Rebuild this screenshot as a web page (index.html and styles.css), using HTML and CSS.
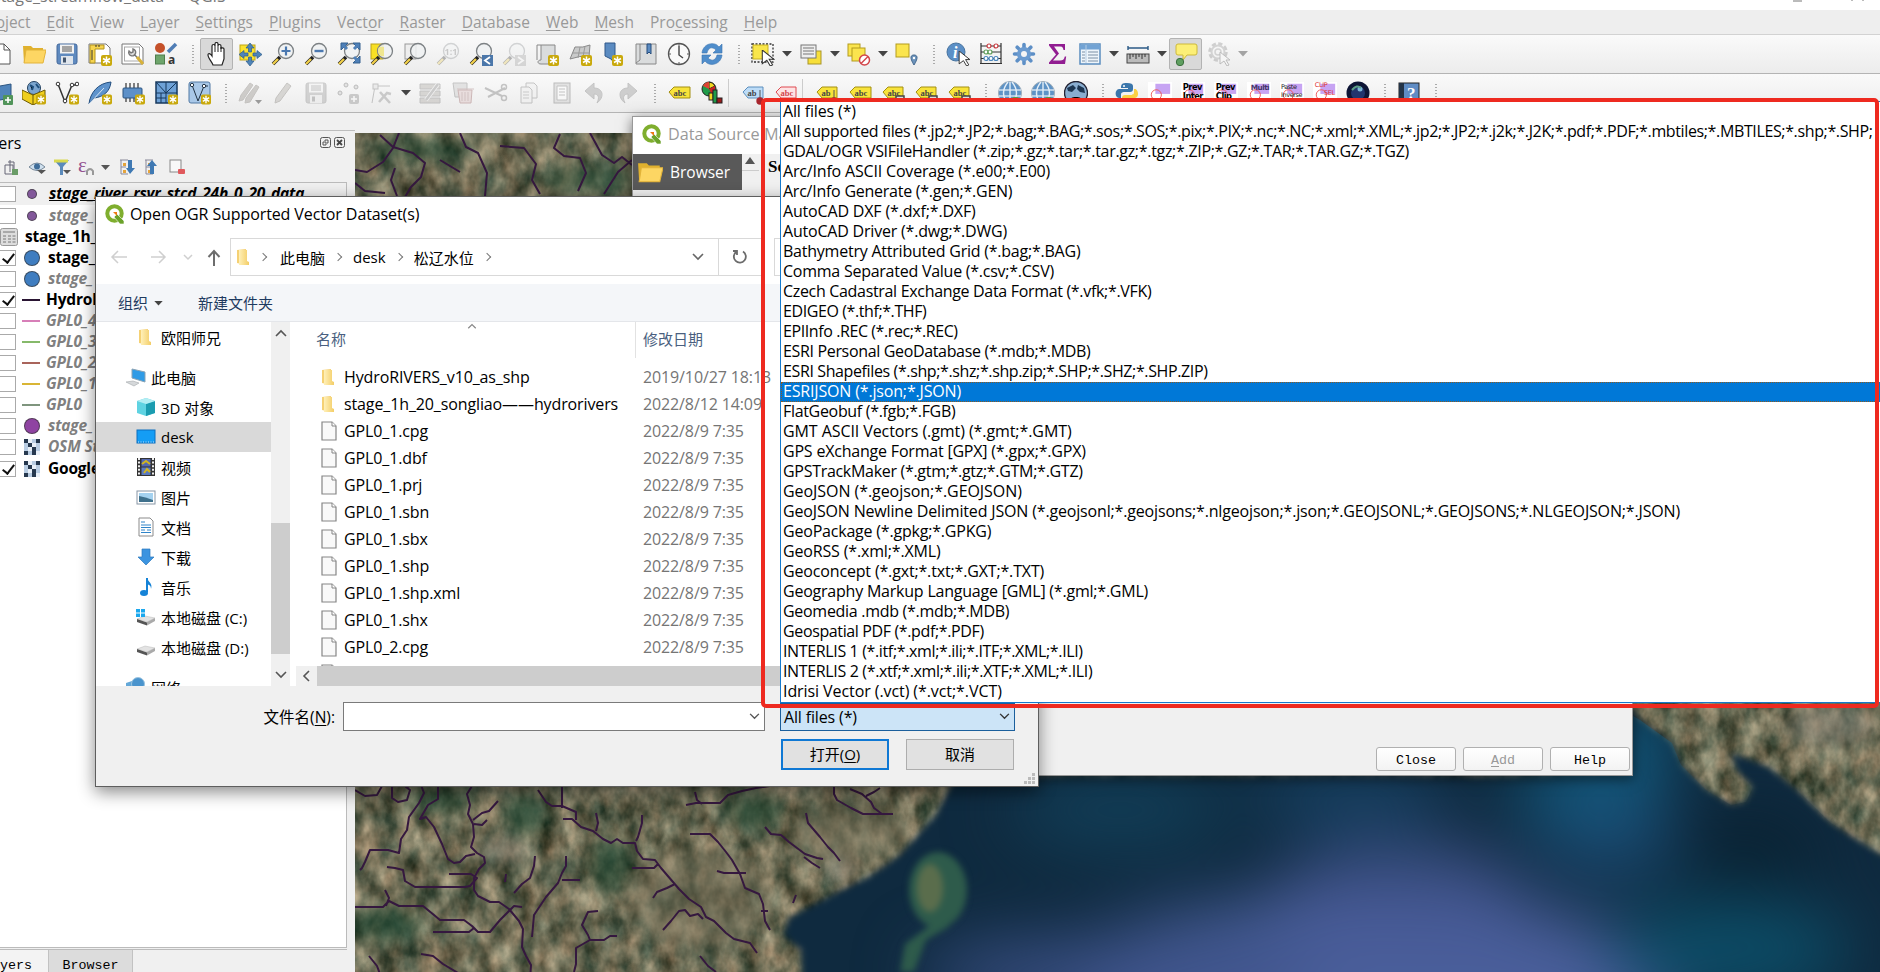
FILE: index.html
```html
<!DOCTYPE html>
<html lang="zh-CN">
<head>
<meta charset="utf-8">
<title>QGIS</title>
<link rel="stylesheet" href="styles.css">
</head>
<body>
<svg class="defs" width="0" height="0">
  <defs>
    <linearGradient id="fold" x1="0" y1="0" x2="1" y2="0"><stop offset="0" stop-color="#fff0b8"/><stop offset="1" stop-color="#f3cd66"/></linearGradient>
    <symbol id="star" viewBox="0 0 11 11"><rect width="11" height="11" rx="2" fill="#c9a90c"/><path d="M5.500 1.500v8M2 3.500l7 4M9 3.500l-7 4" stroke="#fff" stroke-width="1.500"/></symbol>
    <symbol id="lens" viewBox="0 0 24 24"><path d="M2 22l7-7" stroke="#222" stroke-width="3.600"/><path d="M2 22l5-5" stroke="#f0cf4a" stroke-width="2.400"/><circle cx="15" cy="9" r="7.500" fill="#eef1f2" fill-opacity=".85" stroke="#7c8184" stroke-width="1.300"/></symbol>
    <symbol id="new" viewBox="0 0 24 24"><path d="M3 2h12l6 6v14H3z" fill="#fff" stroke="#555"/><path d="M15 2v6h6" fill="none" stroke="#555"/></symbol>
    <symbol id="open" viewBox="0 0 24 24"><path d="M1 4h8l2 2h10v15H2z" fill="#e0b12e"/><path d="M4 8h20l-3 13H2z" fill="#fdd663" stroke="#e2b33a"/></symbol>
    <symbol id="save" viewBox="0 0 24 24"><rect x="2" y="2" width="20" height="20" rx="2" fill="#5f8abf" stroke="#44699b"/><rect x="5" y="2.500" width="14" height="9" fill="#f2f2f2"/><path d="M7 5h10M7 7h10M7 9h10" stroke="#444" stroke-width=".9"/><rect x="6" y="14" width="12" height="8" fill="#dfe5ec"/><rect x="8" y="15.500" width="3" height="5" fill="#44566e"/></symbol>
    <symbol id="layout" viewBox="0 0 24 24"><path d="M1 2h17l4 4v15H1z" fill="#fff" stroke="#777"/><path d="M2 3h14v4H7v14H2z" fill="#f6d44e" stroke="#b39420"/><path d="M4 8v10M8 3v2M11 3v2" stroke="#333"/><use href="#star" x="13" y="13" width="11" height="11"/></symbol>
    <symbol id="manager" viewBox="0 0 24 24"><path d="M1 2h17l4 4v16H1z" fill="#fff" stroke="#777"/><rect x="3.500" y="5" width="15" height="14" fill="none" stroke="#aaa"/><path d="M8 9a3.500 3.500 0 1 0 4-2v3l-2 1zM13 12l8 9" fill="#ddd" stroke="#777" stroke-width="1.400"/><path d="M16 15l6 7" stroke="#d8b23a" stroke-width="3"/></symbol>
    <symbol id="style" viewBox="0 0 24 24"><circle cx="6" cy="6" r="5" fill="#c5512a"/><path d="M14 10l8-8" stroke="#4f7db5" stroke-width="3.500"/><rect x="1.500" y="13" width="9" height="9" fill="#6ea56c" stroke="#4e7e4d"/><text x="14" y="22" font-size="12" font-family="Open Sans" fill="#333">a</text></symbol>
    <symbol id="hand" viewBox="0 0 24 24"><path d="M8 23c-1-3-5-7-5-10 0-2 2-2 4 1V4c0-2 3-2 3 0V2c0-2 3-2 3 0v2c0-2 3-2 3 0v3c0-2 3-1 3 0v10l-2 6z" fill="#fff" stroke="#222" stroke-width="1.200"/><path d="M10 4v6M13 4v6M16 5v5" stroke="#222"/></symbol>
    <symbol id="pansel" viewBox="0 0 24 24"><rect x="2" y="3" width="15" height="15" fill="#fbe22d" stroke="#c0a617"/><path d="M12 1l4 5h-2.500v4h-3V6H8zM12 24l4-5h-2.500v-4h-3v4H8zM1 12.500l5-4V11h4v3H6v2.500zM24 12.500l-5-4V11h-4v3h4v2.500z" fill="#4e84b8" stroke="#2e5c89" stroke-width=".7"/></symbol>
    <symbol id="zin" viewBox="0 0 24 24"><use href="#lens"/><path d="M15 4.500v9M10.500 9h9" stroke="#4a78b0" stroke-width="2.200"/></symbol>
    <symbol id="zout" viewBox="0 0 24 24"><use href="#lens"/><path d="M10.500 9h9" stroke="#4a78b0" stroke-width="2.400"/></symbol>
    <symbol id="zfull" viewBox="0 0 24 24"><use href="#lens"/><path d="M4 1h7L4 8zM23 1v7l-7-7zM23 21h-7l7-7z" fill="#4f80b8" stroke="#34618f"/><path d="M6 3l4 4M21 3l-4 4M21 19l-4-4" stroke="#4f80b8" stroke-width="3"/></symbol>
    <symbol id="zsel" viewBox="0 0 24 24"><rect x="1" y="2" width="12" height="15" fill="#f8e024" stroke="#b9a11c"/><use href="#lens"/><path d="M9 5h5v9h-3a6 6 0 0 1-2-9z" fill="#efe68f"/></symbol>
    <symbol id="zlay" viewBox="0 0 24 24"><rect x="2" y="2" width="11" height="15" fill="#eee" stroke="#999"/><use href="#lens"/></symbol>
    <symbol id="zone" viewBox="0 0 24 24"><use href="#lens"/><text x="8.500" y="12.500" font-size="9" font-family="Open Sans" font-weight="700" fill="#666">1:1</text></symbol>
    <symbol id="zlast" viewBox="0 0 24 24"><use href="#lens"/><rect x="13" y="13" width="11" height="11" fill="#4b77aa"/><path d="M21 15l-5 3.500 5 3.500" stroke="#fff" stroke-width="1.800" fill="none"/></symbol>
    <symbol id="znext" viewBox="0 0 24 24"><use href="#lens"/><rect x="13" y="13" width="11" height="11" fill="#999"/><path d="M16 15l5 3.500-5 3.500" stroke="#fff" stroke-width="1.800" fill="none"/></symbol>
    <symbol id="newmap" viewBox="0 0 24 24"><path d="M2 3h18v19H6c-4 0-4-4 0-4V3" fill="#dadcdd" stroke="#888"/><path d="M2 3v15" stroke="#888"/><use href="#star" x="13" y="13" width="11" height="11"/></symbol>
    <symbol id="map3d" viewBox="0 0 24 24"><path d="M7 5q8 1 15-2l-1 12q-9-2-19 2z" fill="#c9caca" stroke="#888"/><path d="M5 11h17M12 5l-2 11M17 4l-2 11" stroke="#999"/><use href="#star" x="13" y="13" width="11" height="11"/></symbol>
    <symbol id="bmnew" viewBox="0 0 24 24"><path d="M4 1h10v21l-4-5-6-3z" fill="#5b8bc1" stroke="#31598a"/><use href="#star" x="11" y="13" width="11" height="11"/></symbol>
    <symbol id="bm" viewBox="0 0 24 24"><path d="M2 2h20v20H2z" fill="#dadcdd" stroke="#888"/><path d="M6 2v16l-4 3" fill="none" stroke="#888"/><path d="M13 2h4v10l-2-2-2 2z" fill="#5b8bc1" stroke="#264d7c"/></symbol>
    <symbol id="clock" viewBox="0 0 24 24"><circle cx="12" cy="12" r="10.500" fill="#fafafa" stroke="#555" stroke-width="1.300"/><path d="M12 4v9l4 3" fill="none" stroke="#444" stroke-width="1.400"/><path d="M12 2v2M12 20v2M2 12h2M20 12h2" stroke="#555"/></symbol>
    <symbol id="refresh" viewBox="0 0 24 24"><path d="M2 11C3 1 15-1 19 5l3-3v9h-9l3-3c-4-4-8-2-9 3zM22 13c-1 10-13 12-17 6l-3 3v-9h9l-3 3c4 4 8 2 9-3z" fill="#4f8dcb" stroke="#3a73b0" stroke-width=".6"/></symbol>
    <symbol id="cursor" viewBox="0 0 12 14"><path d="M1 0l10 8H7l3 5-2 1-3-5-4 3z" fill="#fff" stroke="#333" stroke-width=".9"/></symbol>
    <symbol id="select" viewBox="0 0 24 24"><rect x="1" y="2" width="21" height="18" fill="none" stroke="#333" stroke-dasharray="2 1.500" stroke-width="1.300"/><rect x="2" y="3" width="15" height="14" fill="#f9e64b" stroke="#c9b322"/><use href="#cursor" x="10" y="8" width="14" height="16"/></symbol>
    <symbol id="selform" viewBox="0 0 24 24"><rect x="9" y="9" width="13" height="13" fill="#f7df39" stroke="#a8952a"/><rect x="2" y="3" width="15" height="13" fill="#eee" stroke="#777"/><path d="M4 6h11M4 9h11M4 12h11" stroke="#777"/></symbol>
    <symbol id="desel" viewBox="0 0 24 24"><rect x="1" y="2" width="12" height="12" fill="#fbe54e" stroke="#b39b1e"/><rect x="5" y="6" width="13" height="13" fill="#fbe54e" stroke="#b39b1e"/><circle cx="17.500" cy="18" r="5" fill="#fff" stroke="#d2454a" stroke-width="1.500"/><path d="M14 21.500l7-7" stroke="#d2454a" stroke-width="1.500"/></symbol>
    <symbol id="selloc" viewBox="0 0 24 24"><rect x="1" y="2" width="13" height="13" fill="#fbe54e" stroke="#b39b1e"/><path d="M19 23c-5-8-3-10 0-10s5 2 0 10z" fill="#6c93bb" stroke="#466a90"/><circle cx="19" cy="16" r="1.200" fill="#fff"/></symbol>
    <symbol id="info" viewBox="0 0 24 24"><circle cx="10" cy="10" r="9" fill="#5b8fc6" stroke="#48749f"/><text x="7" y="16" font-size="16" font-weight="700" font-style="italic" font-family="Liberation Serif" fill="#fff">i</text><use href="#cursor" x="12" y="9" width="13" height="15"/></symbol>
    <symbol id="abacus" viewBox="0 0 24 24"><path d="M2 1v21M22 1v21M2 4h20M2 10h20M2 16.500h20M1 21.500h22" stroke="#333" stroke-width="1.200"/><g fill="#fff" stroke-width="1.200"><g stroke="#c8373c"><circle cx="10" cy="4" r="2"/><circle cx="17" cy="4" r="2"/></g><g stroke="#5e9e59"><circle cx="7" cy="10" r="2"/><circle cx="11" cy="10" r="2"/></g><g stroke="#4b86bc"><circle cx="7" cy="16.500" r="2"/><circle cx="12" cy="16.500" r="2"/><circle cx="17" cy="16.500" r="2"/></g></g></symbol>
    <symbol id="gear" viewBox="0 0 24 24"><g stroke="#5d8fc6" stroke-width="3.600" stroke-linecap="round"><path d="M12 2.500v19M2.500 12h19M5.200 5.200l13.600 13.600M18.800 5.200L5.200 18.800"/></g><circle cx="12" cy="12" r="7" fill="#6b9bd0"/><circle cx="12" cy="12" r="3" fill="#f5f5f5"/></symbol>
    <symbol id="sigma" viewBox="0 0 24 24"><path d="M4 2h16v6h-1.500c-.5-3-1.500-3.500-4-3.500H9l5 7-6 7h7c3 0 4-1 4.800-4h1.400l-1.200 7.500H4v-1.500l7-8-7-9z" fill="#911d91"/></symbol>
    <symbol id="table" viewBox="0 0 24 24"><rect x="2" y="2" width="20" height="20" fill="#eef5fb" stroke="#5b8dbf" stroke-width="1.500"/><path d="M2 5h20" stroke="#72a3d4" stroke-width="5"/><path d="M8 3v18" stroke="#b5cde4"/><path d="M4 10h3M10 10h10M4 13h3M10 13h10M4 16h3M10 16h10M4 19h3M10 19h10" stroke="#7a8fa5"/></symbol>
    <symbol id="ruler" viewBox="0 0 24 24"><path d="M2 6h20M2 4v4M22 4v4" stroke="#2b5a86" stroke-width="1.400"/><rect x="1" y="12" width="22" height="9" fill="#bbb" stroke="#444"/><path d="M4 12v5M7 12v3M10 12v5M13 12v3M16 12v5M19 12v3" stroke="#333"/></symbol>
    <symbol id="tip" viewBox="0 0 24 24"><path d="M4 2h17q2 0 2 2v7q0 2-2 2h-8l-4 5v-5H4q-2 0-2-2V4q0-2 2-2z" fill="#fcef76" stroke="#cdb93a"/><circle cx="6" cy="20" r="3.700" fill="#5f9f60" stroke="#3b6e3e"/></symbol>
    <symbol id="action" viewBox="0 0 24 24"><circle cx="11" cy="10" r="8" fill="none" stroke="#777" stroke-width="3.500" stroke-dasharray="4 2.280"/><circle cx="11" cy="10" r="6.500" fill="none" stroke="#888" stroke-width="2"/><circle cx="11" cy="10" r="3" fill="none" stroke="#888" stroke-width="1.500"/><use href="#cursor" x="12" y="10" width="12" height="14"/></symbol>
    <symbol id="arrow" viewBox="0 0 10 6"><path d="M0 0h10L5 5.500z" fill="#444"/></symbol>
    <symbol id="addlayer" viewBox="0 0 24 24"><path d="M0 7l22-4v14L0 21z" fill="#5184bb" stroke="#2d5580"/><rect x="14" y="14" width="10" height="10" rx="1" fill="#51945a"/><path d="M19 16v6M16 19h6" stroke="#fff" stroke-width="1.600"/></symbol>
    <symbol id="gpkg" viewBox="0 0 24 24"><circle cx="12" cy="7" r="6.500" fill="#7ba5cf" stroke="#23415f"/><path d="M8 4l3 2-1 3M14 3l3 4" stroke="#1d4e7c" stroke-width="2"/><path d="M0 9l11 5 12-5v9l-12 6L0 18z" fill="#f0cf1d" stroke="#6b5905"/><path d="M11 14v10" stroke="#6b5905"/><use href="#star" x="14" y="13" width="10" height="11"/></symbol>
    <symbol id="shp" viewBox="0 0 24 24"><path d="M3 3l7 18 7-17h4" fill="none" stroke="#333" stroke-width="1.500"/><g fill="#fff" stroke="#333"><circle cx="3" cy="3" r="1.800"/><circle cx="17" cy="4" r="1.800"/><circle cx="22" cy="3" r="1.800"/><circle cx="10" cy="20" r="1.800"/></g><use href="#star" x="14" y="13" width="10" height="11"/></symbol>
    <symbol id="feather" viewBox="0 0 24 24"><path d="M1 23C2 12 10 2 23 1c-1 9-7 15-17 16z" fill="#5e93cc" stroke="#234e7e"/><path d="M1 23L16 7" stroke="#d9e7f5"/><use href="#star" x="14" y="13" width="10" height="11"/></symbol>
    <symbol id="chip" viewBox="0 0 24 24"><path d="M5 2v19M9 2v19M13 2v19M17 2v19" stroke="#333" stroke-width="1.200"/><rect x="2" y="7" width="19" height="10" rx="1" fill="#5d90c8" stroke="#2d5580"/><use href="#star" x="14" y="13" width="10" height="11"/></symbol>
    <symbol id="mesh" viewBox="0 0 24 24"><rect x="2" y="1" width="21" height="21" fill="#6ea1d6" stroke="#17395d" stroke-width="1.500"/><path d="M2 12h21M12 1v21M2 1l10 11 11-11M7 12v10M2 17h10" stroke="#17395d" fill="none"/><use href="#star" x="14" y="13" width="10" height="11"/></symbol>
    <symbol id="virt" viewBox="0 0 24 24"><rect x="2" y="1" width="21" height="21" rx="2" fill="#a9c8e8" stroke="#5178a3"/><path d="M5 4l6 16 6-15h4" fill="none" stroke="#234"/><circle cx="5" cy="4" r="1.700" fill="#fff" stroke="#234"/><circle cx="17" cy="5" r="1.700" fill="#fff" stroke="#234"/><use href="#star" x="14" y="13" width="10" height="11"/></symbol>
    <symbol id="pencil" viewBox="0 0 24 24"><path d="M4 22l1-5L16 2l4 3L9 20z" fill="#b5b2ad" stroke="#8b8883"/></symbol>
    <symbol id="pencils" viewBox="0 0 24 24"><path d="M1 20l2-6L12 2l3 2L5 19zM7 22l1-5L18 4l3 2-9 15z" fill="#a09c97" stroke="#8d8984"/><path d="M17 19h7l-3.500 4z" fill="#333"/></symbol>
    <symbol id="pts" viewBox="0 0 24 24"><g fill="#ccc" stroke="#777"><circle cx="3" cy="12" r="2"/><circle cx="9" cy="4" r="2"/><circle cx="19" cy="6" r="2"/></g><rect x="12" y="13" width="10" height="10" rx="2" fill="#999"/><path d="M17 15v6M14 18h6" stroke="#fff" stroke-width="1.500"/></symbol>
    <symbol id="vertex" viewBox="0 0 24 24"><path d="M2 22L5 5h15" fill="none" stroke="#888"/><rect x="3" y="3" width="5" height="5" fill="#ddd" stroke="#888"/><path d="M9 21l8-9 4 1M10 11l10 11" fill="none" stroke="#999" stroke-width="2.600"/></symbol>
    <symbol id="multi" viewBox="0 0 24 24"><path d="M2 3h20v5H2zM2 10h20v5H2zM2 17h20v5H2z" fill="#b5b2ad" stroke="#888"/><path d="M8 19L20 3" stroke="#eee" stroke-width="4"/><path d="M8 19L20 3" stroke="#999" stroke-width="2.500"/></symbol>
    <symbol id="trash" viewBox="0 0 24 24"><path d="M2 2h14v14H4z" fill="#ccc" stroke="#888"/><path d="M7 9h14l-1 13H9z" fill="#ddc4c4" stroke="#a07070"/><path d="M6 8h17M11 11v9M14 11v9M17 11v9" stroke="#a88"/></symbol>
    <symbol id="cut" viewBox="0 0 24 24"><path d="M1 7l17 8M4 16l17-9" stroke="#888" stroke-width="2"/><g fill="none" stroke="#888" stroke-width="1.500"><circle cx="20" cy="6" r="2.500"/><circle cx="20" cy="17" r="2.500"/></g></symbol>
    <symbol id="copy" viewBox="0 0 24 24"><path d="M9 2h8l3 3v12H9z" fill="#eee" stroke="#888"/><path d="M4 6h8l3 3v13H4z" fill="#eee" stroke="#888"/><path d="M6 11h6M6 14h6M6 17h6" stroke="#999"/></symbol>
    <symbol id="paste" viewBox="0 0 24 24"><rect x="4" y="2" width="16" height="20" fill="#ccc" stroke="#777"/><path d="M7 5h10v14H7z" fill="#fff" stroke="#888"/><path d="M9 8h6M9 11h6M9 14h6" stroke="#888"/></symbol>
    <symbol id="undo" viewBox="0 0 24 24"><path d="M2 10l9-8v5c9 0 11 9 3 15 3-6 1-9-3-9v5z" fill="#a2a2a2" stroke="#888"/></symbol>
    <symbol id="label" viewBox="0 0 24 24"><path d="M2 11l5-5h16v11H7z" fill="#f8e33a" stroke="#a38f12"/><text x="6.500" y="14.500" font-size="8.500" font-weight="700" font-family="Liberation Serif" fill="#444">abc</text></symbol>
    <symbol id="labelb" viewBox="0 0 24 24"><path d="M2 11l5-5h15v11H7z" fill="#bddcf7" stroke="#5c8fbe"/><text x="6.500" y="14.500" font-size="8.500" font-weight="700" font-family="Liberation Serif" fill="#444">ab</text><path d="M19 9v10" stroke="#555"/><circle cx="19" cy="20" r="3.700" fill="#a8262e"/></symbol>
    <symbol id="labely" viewBox="0 0 24 24"><path d="M2 11l5-5h15v11H7z" fill="#f8e33a" stroke="#a38f12"/><text x="6.500" y="14.500" font-size="8.500" font-weight="700" font-family="Liberation Serif" fill="#444">ab</text><path d="M19 9v10" stroke="#555"/><circle cx="19" cy="20" r="3.700" fill="#a8262e"/></symbol>
    <symbol id="labelr" viewBox="0 0 24 24"><path d="M2 11l5-5h15v11H7z" fill="#fde3e4" stroke="#df4a50"/><text x="6.500" y="14.500" font-size="8.500" font-weight="700" font-family="Liberation Serif" fill="#d2454a">abc</text></symbol>
    <symbol id="labelp" viewBox="0 0 24 24"><path d="M2 11l5-5h15v11H7z" fill="#f8e33a" stroke="#a38f12"/><text x="6.500" y="14.500" font-size="8.500" font-weight="700" font-family="Liberation Serif" fill="#444">abc</text><rect x="15" y="15" width="8" height="8" fill="#ddd" stroke="#444" stroke-width="1.500"/></symbol>
    <symbol id="diag" viewBox="0 0 24 24"><circle cx="9" cy="8" r="7" fill="#1f9b48" stroke="#222"/><path d="M9 8V1a7 7 0 0 1 6 4z" fill="#f2d71f" stroke="#222"/><path d="M9 8L3 5a7 7 0 0 1 6-4z" fill="#d43"/><path d="M9 8l6-3v6l-3 3z" fill="#c22"/><rect x="9" y="12" width="4" height="7" fill="#f2d71f" stroke="#222"/><rect x="13" y="9" width="4" height="13" fill="#1f9b48" stroke="#222"/><rect x="17" y="17" width="5" height="5" fill="#9b1c1c" stroke="#222"/></symbol>
    <symbol id="globe" viewBox="0 0 24 24"><circle cx="12" cy="12" r="11.500" fill="#5e93c6" stroke="#a0aeb9"/><path d="M1 9h22M1 15h22" stroke="#cfe0ee" fill="none" stroke-width="1.400"/><path d="M12 1v22M10 1q-9 11 0 22M14 1q9 11 0 22" stroke="#e4eef7" stroke-width="1.400" fill="none"/><rect x="14" y="16" width="7" height="7" rx="2" fill="#5b9a4a"/></symbol>
    <symbol id="globed" viewBox="0 0 24 24"><circle cx="12" cy="12" r="11.500" fill="#89add0" stroke="#223" stroke-width="1.400"/><path d="M3 7l6-3 3 3-4 4-4-1zM14 4l6 3 1 5-5-1-3-3z" fill="#1d3652"/><path d="M4 22q2-7 8-6 6-1 8 6z" fill="#000"/></symbol>
    <symbol id="python" viewBox="0 0 24 24"><path d="M12 2c-5 0-6 1-6 5h7v1H4c-5 1-4 9 0 9h2v-3c0-3 2-3 4-3h5c2 0 3-1 3-3V5c0-2-2-3-6-3z" fill="#3b76ab"/><path d="M12 23c5 0 6-1 6-5h-7v-1h9c5-1 3-9 0-9h-1v3c0 3-2 3-4 3h-5c-2 0-3 1-3 3v3c0 2 2 3 5 3z" fill="#fbd043"/><circle cx="9" cy="5" r="1" fill="#fff"/></symbol>
    <symbol id="digi" viewBox="0 0 26 24"><rect width="26" height="24" fill="#fff"/><rect x="8" y="2" width="16" height="11" fill="#c7a4f3"/><circle cx="9" cy="14" r="5.500" fill="none" stroke="#e55"/></symbol>
    <symbol id="earth" viewBox="0 0 24 24"><circle cx="12" cy="12" r="11.500" fill="#0d1535"/><circle cx="12" cy="12" r="7" fill="#21356e"/><circle cx="14" cy="8" r="2.500" fill="#7cb6d8"/><path d="M6 9q5-6 9-2" stroke="#5c9f87" fill="none" stroke-width="2"/></symbol>
    <symbol id="book" viewBox="0 0 24 24"><rect x="2" y="2" width="20" height="22" fill="#5f8cc4" stroke="#222"/><path d="M2 2h5v22H2z" fill="#243447"/><text x="10" y="18" font-size="17" font-family="Liberation Serif" fill="#fff">?</text></symbol>
    <symbol id="qgis" viewBox="0 0 20 20"><circle cx="9.500" cy="9.500" r="7.200" fill="none" stroke="#7fae2e" stroke-width="4"/><path d="M12 10l7 7v3h-4l-6-7z" fill="#6ba22a" stroke="#fff" stroke-width=".6"/><path d="M8 8h4v4z" fill="#ee7913"/></symbol>
    <symbol id="folder" viewBox="0 0 14 18"><path d="M1 2l9-1v16l-9-2z" fill="#f5d174"/><path d="M3 2h8v11l2 1v3H3z" fill="url(#fold)"/></symbol>
    <symbol id="file" viewBox="0 0 16 20"><path d="M1 1h10l4 4v14H1z" fill="#f9f9f9" stroke="#858585" stroke-width="1.200"/><path d="M11 1v4h4" fill="#fff" stroke="#858585"/></symbol>
    <symbol id="pc" viewBox="0 0 20 18"><path d="M6 1l13 3v10L6 10z" fill="#2f9be6" stroke="#8aa3b5"/><path d="M0 14l7-1 6 2-5 3z" fill="#d5d8da" stroke="#a5a9ac" stroke-width=".6"/></symbol>
    <symbol id="cube" viewBox="0 0 20 20"><path d="M1 4l9-3 9 3v12l-9 3-9-3z" fill="#5fd3e2"/><path d="M10 7l9-3v12l-9 3z" fill="#1b9cb0"/><path d="M1 4l9-3 9 3-9 3z" fill="#b4eef3"/></symbol>
    <symbol id="desk" viewBox="0 0 20 20"><rect x="1" y="3" width="18" height="13" fill="#149df5" stroke="#0b6fbf"/><path d="M2 15h16" stroke="#bfe3ff" stroke-dasharray="1 1.500"/></symbol>
    <symbol id="video" viewBox="0 0 20 20"><rect x="1" y="1" width="18" height="18" fill="#333"/><path d="M3 1v18M17 1v18" stroke="#eee" stroke-width="2" stroke-dasharray="2 1.600"/><rect x="5.500" y="2" width="9" height="7.500" fill="#5367b0"/><rect x="5.500" y="10.500" width="9" height="7.500" fill="#5b7ac0"/><path d="M6 7l4-3 4 3M8 16l3-4 3 3" stroke="#d1b520" stroke-width="2" fill="none"/></symbol>
    <symbol id="pic" viewBox="0 0 20 20"><rect x="1" y="4" width="18" height="13" fill="#fff" stroke="#8796a5"/><path d="M3 6h14v9H3z" fill="#a4d2f0"/><path d="M3 9q6 1 14 4v2H3z" fill="#3e708c"/></symbol>
    <symbol id="doc" viewBox="0 0 20 20"><path d="M3 1h11l3 3v15H3z" fill="#fff" stroke="#8b8b8b"/><path d="M5 5h4M5 8h10M5 10.500h10M5 13h4M11 13h4M5 15.500h10" stroke="#2e84c9"/></symbol>
    <symbol id="down" viewBox="0 0 20 20"><path d="M6 2h8v8h4l-8 8-8-8h4z" fill="#3c94e0" stroke="#2b78bd" stroke-width=".7"/></symbol>
    <symbol id="music" viewBox="0 0 20 20"><path d="M11 1v14" stroke="#1583d7" stroke-width="2"/><path d="M11 1c1 4 6 5 4 11 0-4-2-4-4-5z" fill="#1583d7"/><ellipse cx="8" cy="16" rx="4" ry="3" fill="#1583d7"/></symbol>
    <symbol id="drive" viewBox="0 0 20 20"><path d="M1 12l8-3 10 2-8 4z" fill="#e3e3e3" stroke="#bbb" stroke-width=".5"/><path d="M1 12l10 3.500v3L1 15z" fill="#555"/><path d="M11 15l8-4v3l-8 4.500z" fill="#aaa"/></symbol>
    <symbol id="drivec" viewBox="0 0 20 20"><use href="#drive"/><path d="M0 2h4v3.500H0zM5 2h4v3.500H5zM0 6.500h4V10H0zM5 6.500h4V10H5z" fill="#1ba8ee"/></symbol>
    <symbol id="net" viewBox="0 0 20 20"><path d="M0 6l6-2v9l-6 1z" fill="#64a8d8"/><circle cx="12" cy="7" r="6.500" fill="#4a94cd" stroke="#9bc4e0"/></symbol>
    <symbol id="dn" viewBox="0 0 12 8"><path d="M1 1l5 5 5-5" fill="none" stroke="currentColor" stroke-width="1.600"/></symbol>
    <symbol id="raster" viewBox="0 0 16 16"><rect width="16" height="16" fill="#b9cde3"/><path d="M0 0h4v4H0zM12 0h4v4h-4zM4 4h4v4H4zM0 12h4v4H0zM8 12h4v4H8zM8 8h4v4H8z" fill="#27394f"/><path d="M4 0h4v4H4zM8 4h4v4H8zM4 8h4v4H4zM12 12h4v4h-4z" fill="#e9f0f8"/></symbol>
  </defs>
</svg>

<div class="screen">
  <div class="app">
    <div class="titlebar"><span class="title">stage_streamflow_data — QGIS</span><svg class="winbtn" width="80" height="10" viewBox="0 0 80 10"><path d="M2 1h9M61 0v1M72 0v1" stroke="#777"/></svg></div>
    <nav class="menubar">
      <span>Pr<u>o</u>ject</span><span><u>E</u>dit</span><span><u>V</u>iew</span><span><u>L</u>ayer</span><span><u>S</u>ettings</span><span><u>P</u>lugins</span><span>Vect<u>o</u>r</span><span><u>R</u>aster</span><span><u>D</u>atabase</span><span><u>W</u>eb</span><span><u>M</u>esh</span><span>Pro<u>c</u>essing</span><span><u>H</u>elp</span>
    </nav>
    <div class="toolbar first">
      <b><svg><use href="#new"/></svg></b><b><svg><use href="#open"/></svg></b><b><svg><use href="#save"/></svg></b><b><svg><use href="#layout"/></svg></b><b><svg><use href="#manager"/></svg></b><b><svg><use href="#style"/></svg></b><i class="grip"></i>
      <b class="on"><svg><use href="#hand"/></svg></b><b><svg><use href="#pansel"/></svg></b><b><svg><use href="#zin"/></svg></b><b><svg><use href="#zout"/></svg></b><b><svg><use href="#zfull"/></svg></b><b><svg><use href="#zsel"/></svg></b><b><svg><use href="#zlay"/></svg></b><b class="off"><svg><use href="#zone"/></svg></b><b><svg><use href="#zlast"/></svg></b><b class="off"><svg><use href="#znext"/></svg></b><b><svg><use href="#newmap"/></svg></b><b><svg><use href="#map3d"/></svg></b><b><svg><use href="#bmnew"/></svg></b><b><svg><use href="#bm"/></svg></b><b><svg><use href="#clock"/></svg></b><b><svg><use href="#refresh"/></svg></b><i class="grip"></i>
      <b><svg><use href="#select"/></svg></b><i class="arr"><svg><use href="#arrow"/></svg></i><b><svg><use href="#selform"/></svg></b><i class="arr"><svg><use href="#arrow"/></svg></i><b><svg><use href="#desel"/></svg></b><i class="arr"><svg><use href="#arrow"/></svg></i><b><svg><use href="#selloc"/></svg></b><i class="grip"></i>
      <b><svg><use href="#info"/></svg></b><b><svg><use href="#abacus"/></svg></b><b><svg><use href="#gear"/></svg></b><b><svg><use href="#sigma"/></svg></b><b><svg><use href="#table"/></svg></b><i class="arr"><svg><use href="#arrow"/></svg></i><b><svg><use href="#ruler"/></svg></b><i class="arr"><svg><use href="#arrow"/></svg></i><b class="on"><svg><use href="#tip"/></svg></b><b class="off"><svg><use href="#action"/></svg></b><i class="arr dim"><svg><use href="#arrow"/></svg></i>
    </div>
    <div class="toolbar second">
      <b><svg><use href="#addlayer"/></svg></b><b><svg><use href="#gpkg"/></svg></b><b><svg><use href="#shp"/></svg></b><b><svg><use href="#feather"/></svg></b><b><svg><use href="#chip"/></svg></b><b><svg><use href="#mesh"/></svg></b><b><svg><use href="#virt"/></svg></b><i class="grip"></i>
      <b class="dim"><svg><use href="#pencils"/></svg></b><b class="dim"><svg><use href="#pencil"/></svg></b><b class="off gray"><svg><use href="#save"/></svg></b><b class="dim"><svg><use href="#pts"/></svg></b><b class="dim"><svg><use href="#vertex"/></svg></b><i class="arr"><svg><use href="#arrow"/></svg></i><b class="dim"><svg><use href="#multi"/></svg></b><b class="dim"><svg><use href="#trash"/></svg></b><b class="dim"><svg><use href="#cut"/></svg></b><b class="dim"><svg><use href="#copy"/></svg></b><b class="dim"><svg><use href="#paste"/></svg></b><b class="dim"><svg><use href="#undo"/></svg></b><b class="dim flip"><svg><use href="#undo"/></svg></b><i class="grip"></i>
      <b><svg><use href="#label"/></svg></b><b><svg><use href="#diag"/></svg></b><i class="sep"></i><b><svg><use href="#labelb"/></svg></b><b><svg><use href="#labelr"/></svg></b><i class="sep"></i><b><svg><use href="#labely"/></svg></b><b><svg><use href="#label"/></svg></b><b><svg><use href="#labelp"/></svg></b><b><svg><use href="#labelp"/></svg></b><b><svg><use href="#labelp"/></svg></b><i class="grip"></i>
      <b><svg><use href="#globe"/></svg></b><b><svg><use href="#globe"/></svg></b><b><svg><use href="#globed"/></svg></b><i class="grip"></i>
      <b><svg><use href="#python"/></svg></b><b><svg><use href="#digi"/></svg></b><b><svg viewBox="0 0 26 24"><use href="#digi"/><text class="t9" x="2" y="9">Prev</text><text class="t9" x="2" y="18">Inter</text></svg></b><b><svg viewBox="0 0 26 24"><use href="#digi"/><text class="t9" x="2" y="9">Prev</text><text class="t9" x="2" y="18">Clip</text></svg></b><b><svg viewBox="0 0 26 24"><use href="#digi"/><text class="t8" x="4" y="9">Multi</text></svg></b><b><svg viewBox="0 0 26 24"><use href="#digi"/><text class="t7" x="1" y="8">Paste</text><text class="t7" x="1" y="16">Inverse</text></svg></b><b><svg viewBox="0 0 26 24"><use href="#digi"/><text class="t7 red" x="2" y="6">CLIP</text><text class="t7 red" x="12" y="14">SEL</text></svg></b><b><svg><use href="#earth"/></svg></b><i class="grip"></i>
      <b><svg><use href="#book"/></svg></b><i class="grip"></i>
    </div>
    <div class="work">
      <aside class="dock">
        <div class="dockhead"><span class="cut">Layers</span><svg width="28" height="14" viewBox="0 0 28 14"><g fill="none" stroke="#555"><rect x="1.500" y="1.500" width="10" height="10" rx="2"/><rect x="15.500" y="1.500" width="10" height="10" rx="2"/><path d="M4 6h3v3H4zM6 5V4h3v3H8"/></g><path d="M18 4l5 5M23 4l-5 5" stroke="#444" stroke-width="1.800"/></svg></div>
        <div class="docktools">
          <svg width="190" height="20" viewBox="0 0 190 20"><path d="M5 7h8v9H5zM8 4h6v11M10 2v12" fill="none" stroke="#667"/><rect x="12" y="11" width="6" height="6" fill="#6a9c67"/><path d="M29 9q8-8 16 0-8 7-16 0z" fill="#cfe0ee" stroke="#789"/><circle cx="37" cy="8.500" r="3" fill="#3f6d99"/><path d="M37 12h9l-4.500 4z" fill="#555"/><path d="M54 2h15l-6 7v8h-3V9z" fill="#5a8abb"/><path d="M54 3h14" stroke="#d8d94e" stroke-width="3"/><path d="M63 12h8l-4 4z" fill="#555"/><text x="78" y="14" font-size="21" font-family="Liberation Serif" fill="#93508f">ε</text><path d="M87 17v-4q3-4 6 0v4" fill="none" stroke="#999" stroke-width="2"/><path d="M101 7h9l-4.500 5z" fill="#555"/><path d="M120 2h8M121 2v14h7M121 9h5" fill="none" stroke="#889"/><path d="M123 5h3v3h-3zM123 12h3v3h-3z" fill="#e5a43b"/><path d="M128 2h4v8h3l-5 6-4-6h2z" fill="#3f79b3"/><path d="M145 2h8M146 2v14h7M146 9h5" fill="none" stroke="#889"/><path d="M148 5h3v3h-3zM148 12h3v3h-3z" fill="#e5a43b"/><path d="M150 16h4V8h3l-5-6-5 6h3z" fill="#3f79b3"/><rect x="170" y="2" width="11" height="12" fill="#f8f8f8" stroke="#888"/><rect x="178" y="11" width="7" height="5" rx="1" fill="#e0595c"/></svg>
        </div>
        <ul class="layers">
          <li class="sel"><s></s><em class="dot s" style="--c:#82589a"></em><span class="cur">stage_river_rsvr_stcd_24h_0_20_data</span></li>
          <li><s></s><em class="dot s" style="--c:#82589a"></em><span class="hid">stage_</span></li>
          <li class="tbl"><svg class="tb" viewBox="0 0 18 18"><rect x=".5" y=".5" width="17" height="17" rx="2" fill="#ddd" stroke="#999"/><path d="M3 4h12M3 8h3M8 8h3M12.500 8h3M3 11h3M8 11h3M12.500 11h3M3 14h3M8 14h3M12.500 14h3" stroke="#777"/></svg><span>stage_1h_</span></li>
          <li><s class="ck"></s><em class="dot" style="--c:#3f7dc0"></em><span>stage_</span></li>
          <li><s></s><em class="dot" style="--c:#3f7dc0"></em><span class="hid">stage_</span></li>
          <li class="ln"><s class="ck"></s><em class="line" style="--c:#2a1533"></em><span>HydroRIVERS</span></li>
          <li class="ln"><s></s><em class="line" style="--c:#d77fb8"></em><span class="hid">GPL0_4</span></li>
          <li class="ln"><s></s><em class="line" style="--c:#86b96a"></em><span class="hid">GPL0_3</span></li>
          <li class="ln"><s></s><em class="line" style="--c:#a9645b"></em><span class="hid">GPL0_2</span></li>
          <li class="ln"><s></s><em class="line" style="--c:#d9b535"></em><span class="hid">GPL0_1</span></li>
          <li class="ln"><s></s><em class="line" style="--c:#7f957e"></em><span class="hid">GPL0</span></li>
          <li><s></s><em class="dot" style="--c:#8f43a2"></em><span class="hid">stage_</span></li>
          <li class="ras"><s></s><svg class="rs"><use href="#raster"/></svg><span class="hid">OSM Standard</span></li>
          <li class="ras"><s class="ck"></s><svg class="rs"><use href="#raster"/></svg><span>Google Satellite</span></li>
        </ul>
        <div class="docktabs"><span class="tab act">Layers</span><span class="tab">Browser</span></div>
      </aside>
      <svg class="map" width="1525" height="839" viewBox="355 133 1525 839">
        <defs>
          <filter id="land" x="0" y="0" width="100%" height="100%" color-interpolation-filters="sRGB"><feTurbulence type="fractalNoise" baseFrequency=".05 .035" numOctaves="4" seed="8"/><feColorMatrix values=".9 .2 0 0 -.13  .7 .3 0 0 -.08  .6 .3 0 0 -.12  0 0 0 0 1"/></filter>
          <filter id="soft" x="-40%" y="-40%" width="180%" height="180%" color-interpolation-filters="sRGB"><feGaussianBlur stdDeviation="34"/></filter>
          <filter id="edge" color-interpolation-filters="sRGB"><feGaussianBlur stdDeviation="3"/></filter>
          <filter id="patch" x="-30%" y="-30%" width="160%" height="160%" color-interpolation-filters="sRGB"><feGaussianBlur stdDeviation="8"/></filter>
          <clipPath id="sea"><path d="M953 786L937 813 900 855 868 877 832 895 789 918 784 935 801 950 803 972H1880V853L1831 823 1800 793 1769 767 1731 753 1737 770 1753 787 1746 802 1731 805 1706 790 1681 765 1672 743 1640 720 1633 716V776H955z"/></clipPath>
        </defs>
        <rect x="355" y="133" width="1525" height="839" fill="#67644f"/>
        <rect x="355" y="133" width="1525" height="839" filter="url(#land)" opacity=".85"/>
        <g fill="#16432f" opacity=".6" filter="url(#patch)"><ellipse cx="525" cy="815" rx="20" ry="24"/><ellipse cx="385" cy="925" rx="38" ry="18"/><ellipse cx="610" cy="865" rx="20" ry="28"/><ellipse cx="755" cy="812" rx="28" ry="18"/><ellipse cx="440" cy="800" rx="34" ry="12"/><ellipse cx="590" cy="180" rx="50" ry="14"/><ellipse cx="420" cy="150" rx="50" ry="10"/></g>
        <g fill="#8d8b80" opacity=".5" filter="url(#patch)"><ellipse cx="505" cy="850" rx="26" ry="12"/><ellipse cx="840" cy="868" rx="16" ry="16"/><ellipse cx="1830" cy="725" rx="45" ry="20"/></g>
        <g fill="#756f58" opacity=".5" filter="url(#patch)"><ellipse cx="700" cy="900" rx="70" ry="50"/><ellipse cx="850" cy="830" rx="60" ry="30"/></g>
        <path d="M953 780L937 813 900 855 868 877 832 895 789 918 784 935 801 950 803 982H1890V860L1831 823 1800 793 1769 767 1731 753 1737 770 1753 787 1746 802 1731 805 1706 790 1681 765 1672 743 1640 720 1625 700V776H955z" fill="#0f2a3f" filter="url(#edge)"/>
        <g clip-path="url(#sea)"><g filter="url(#soft)">
          <ellipse cx="1370" cy="985" rx="320" ry="90" fill="#4a5f9b"/>
          <ellipse cx="1400" cy="900" rx="130" ry="60" fill="#495b98" opacity=".75"/>
          <ellipse cx="1120" cy="975" rx="200" ry="35" fill="#3d5288"/>
          <ellipse cx="1590" cy="790" rx="75" ry="45" fill="#12577a"/>
          <ellipse cx="1610" cy="840" rx="70" ry="35" fill="#1a4a72"/>
          <ellipse cx="1120" cy="810" rx="110" ry="35" fill="#12405a"/>
          <ellipse cx="1350" cy="795" rx="100" ry="30" fill="#174366"/>
          <ellipse cx="1730" cy="950" rx="120" ry="50" fill="#0c4c66"/>
          <ellipse cx="1750" cy="850" rx="70" ry="30" fill="#08202f"/>
          <ellipse cx="1640" cy="735" rx="26" ry="34" fill="#136a92"/>
        </g></g>
        <g filter="url(#edge)"><ellipse cx="938" cy="890" rx="29" ry="38" fill="#2e5b4b"/><ellipse cx="930" cy="888" rx="13" ry="24" fill="#5a6d4c"/><path d="M900 972l5-28 30-22 15 4-24 14-12 32z" fill="#2e5b4b"/></g>
        <g fill="none" stroke="#35183f" stroke-width="2" stroke-linejoin="round">
          <path d="M355 790l10 6 12-1 5-9M392 786v12l6 4 9-2 3-10-4-3 7-2h8l3 8-5 10-10 14-2 13-6 9-2 14-11-3h-18l-5 12-3 6-2 2M438 787v12l-10 6-8 14 6-2 8 10 8 17 6 15 6 4 6-1 6-6 9-2"/>
          <path d="M472 786l-5 8 3 11-2 9 5 10 1 13-3 10 6 6 7 4 1 6-6 6-5 9v12l4 6 12 6h9l10 7 10 12 4 8-1 18 4 9 5 9-1 14 5 9 17 9 10 14v20M498 801l-9 10-7 2-9 7M449 874h22l6 4-7 8-5 1h-50l-10-6-2-11-8-2-8-1M474 824l8 1 5-5M535 856l-1 10-4 12-8 6-8 9M506 874l-1 8M566 856v10l-4 7-4 10-12 14-12 18-2 22M562 880h18"/>
          <path d="M355 907h28l6-6 10 5h24l11 9 6 5h24l8 6 6 6h12l10-12 14-14 8 1M385 890l4 8-3 8M433 932h36l5-4M598 911l-10 1-6 13 6 10 2 5h14l6-4h7M590 940l-14 8v16l-2 8M538 790l8 12 6 4h10l14 6v8"/>
          <path d="M562 786v22M563 819h9l9 8 12 4 10 8 8 4 6-4 6 4h12l2 8 6 8 12 1 6 8 12 14 6 7 10 10 12 8 5 10 8 4 12 12 8 6 16 4 7 10M596 813l2 10-2 8M642 815v8l-4 14-2 4M632 868h22l4-4M653 898l4-6 10-4 8-4M663 930l8-9 8-10 6-1 5 6 8-2 5 5M690 834h20l8 8 8 10 6 8 8 14 5 14 14 6 4 10 2 17 5 9M717 871l7 2h22M761 911h7M765 827l6 7 10 1 8 7 8 6 8 6 12 4 6 1M806 813l2 10 12 14 8 10 6 6 6 8M804 857l8 6 8 5M834 786v8l3 6 14 8 12 6h30M850 789l12 5 9 8 3 6 8 6M880 788l-6 4-8 4M770 786l-14 2-14 3-14 4-8 8h-24l-10 2M695 792l2 8 5 4M421 954l12 2 10 8 15 9M369 956l8 10 3 8M700 956l8 10 8 6M796 895l-3 8"/>
          <path d="M355 170l12 2 16-10 10-14 6-15M380 135l13 12 20 6 12 10-4 14-10 10-6 10M355 183l10 8 20 2M460 133l6 14 12 6 9 20-2 23M440 160l20 12M500 146l24 2 12 16-4 16 8 14M560 134l-6 14 10 8 16 2 6 15-8 18M590 133l12 22 12 8 8-6 10 8M632 160l-14 12-14 22M395 168l-4 12 6 16"/>
        </g>
      </svg>
    </div>
  </div>

  <section class="dsm">
    <header><svg width="20" height="20"><use href="#qgis"/></svg><span>Data Source Ma</span></header>
    <div class="dsmbody"><div class="dsmnav"><div class="brow"><svg width="26" height="26"><use href="#open"/></svg><span>Browser</span></div></div><div class="dsmsc"><svg width="10" height="7" viewBox="0 0 10 7"><path d="M0 7l5-7 5 7z" fill="#555"/></svg></div><div class="dsmmain">Source</div></div>
    <footer><button>Close</button><button disabled><u>A</u>dd</button><button>Help</button></footer>
  </section>

  <section class="dialog">
    <header><svg width="20" height="20"><use href="#qgis"/></svg><span>Open OGR Supported Vector Dataset(s)</span></header>
    <div class="navrow">
      <svg class="navs" width="134" height="24" viewBox="0 0 134 24"><g fill="none" stroke-width="1.500"><path d="M31 12H16M22 6l-6 6 6 6" stroke="#cfcfcf"/><path d="M55 12h14M63 6l6 6-6 6" stroke="#cfcfcf"/><path d="M88 10l4 4 4-4" stroke="#cfcfcf"/><path d="M118 21V6M112.500 12l5.500-6 5.500 6" stroke="#6d6d6d" stroke-width="2"/></g></svg>
      <div class="addr"><svg width="14" height="18"><use href="#folder"/></svg><q></q><span>此电脑</span><q></q><span>desk</span><q></q><span>松辽水位</span><q></q><svg class="dd" width="12" height="8"><use href="#dn"/></svg></div>
      <div class="rel"><svg width="16" height="18" viewBox="0 0 16 18"><path d="M11 3.500A6 6 0 1 1 4 4M1 3l4 0v4" fill="none" stroke="#6b6b6b" stroke-width="1.800"/></svg></div>
      <div class="search"></div>
    </div>
    <div class="cmds"><span>组织<svg width="9" height="5"><use href="#arrow"/></svg></span><span>新建文件夹</span></div>
    <div class="panes">
      <div class="tree">
        <div class="n a"><svg class="fo"><use href="#folder"/></svg>欧阳师兄</div>
        <div class="n root"><svg><use href="#pc"/></svg>此电脑</div>
        <div class="n"><svg><use href="#cube"/></svg>3D 对象</div>
        <div class="n pick"><svg><use href="#desk"/></svg>desk</div>
        <div class="n"><svg><use href="#video"/></svg>视频</div>
        <div class="n"><svg><use href="#pic"/></svg>图片</div>
        <div class="n"><svg><use href="#doc"/></svg>文档</div>
        <div class="n"><svg><use href="#down"/></svg>下载</div>
        <div class="n"><svg><use href="#music"/></svg>音乐</div>
        <div class="n"><svg><use href="#drivec"/></svg>本地磁盘 (C:)</div>
        <div class="n"><svg><use href="#drive"/></svg>本地磁盘 (D:)</div>
        <div class="n root net"><svg><use href="#net"/></svg>网络</div>
      </div>
      <div class="vbar"><svg class="up" width="12" height="8"><use href="#dn"/></svg><div class="thumb"></div><svg width="12" height="8"><use href="#dn"/></svg></div>
      <div class="files">
        <div class="fh"><span class="c1">名称<svg class="sort" width="10" height="6"><use href="#dn"/></svg></span><span class="c2">修改日期</span></div>
        <div class="fl">
          <div class="f"><svg class="fo"><use href="#folder"/></svg><span>HydroRIVERS_v10_as_shp</span><time>2019/10/27 18:13</time></div>
          <div class="f"><svg class="fo"><use href="#folder"/></svg><span>stage_1h_20_songliao——hydrorivers</span><time>2022/8/12 14:09</time></div>
          <div class="f"><svg><use href="#file"/></svg><span>GPL0_1.cpg</span><time>2022/8/9 7:35</time></div>
          <div class="f"><svg><use href="#file"/></svg><span>GPL0_1.dbf</span><time>2022/8/9 7:35</time></div>
          <div class="f"><svg><use href="#file"/></svg><span>GPL0_1.prj</span><time>2022/8/9 7:35</time></div>
          <div class="f"><svg><use href="#file"/></svg><span>GPL0_1.sbn</span><time>2022/8/9 7:35</time></div>
          <div class="f"><svg><use href="#file"/></svg><span>GPL0_1.sbx</span><time>2022/8/9 7:35</time></div>
          <div class="f"><svg><use href="#file"/></svg><span>GPL0_1.shp</span><time>2022/8/9 7:35</time></div>
          <div class="f"><svg><use href="#file"/></svg><span>GPL0_1.shp.xml</span><time>2022/8/9 7:35</time></div>
          <div class="f"><svg><use href="#file"/></svg><span>GPL0_1.shx</span><time>2022/8/9 7:35</time></div>
          <div class="f"><svg><use href="#file"/></svg><span>GPL0_2.cpg</span><time>2022/8/9 7:35</time></div>
          <div class="f"><svg><use href="#file"/></svg></div>
        </div>
        <div class="hbar"><svg width="12" height="8"><use href="#dn"/></svg><div class="ht"></div></div>
      </div>
    </div>
    <div class="foot">
      <div class="frow"><label>文件名(<u>N</u>):</label><div class="inp"><svg width="11" height="7"><use href="#dn"/></svg></div><div class="combo"><span>All files (*)</span><svg width="11" height="7"><use href="#dn"/></svg></div></div>
      <div class="brw"><div class="btn main">打开(<u>O</u>)</div><div class="btn">取消</div></div>
      <svg class="size" width="12" height="12" viewBox="0 0 12 12"><path d="M8 0h3v3H8zM4 4h3v3H4zM8 4h3v3H8zM0 8h3v3H0zM4 8h3v3H4zM8 8h3v3H8z" fill="#bbb"/></svg>
    </div>
  </section>

  <ul class="popup">
    <li style="--t:-.15px">All files (*)</li>
    <li style="--t:-.37px">All supported files (*.jp2;*.JP2;*.bag;*.BAG;*.sos;*.SOS;*.pix;*.PIX;*.nc;*.NC;*.xml;*.XML;*.jp2;*.JP2;*.j2k;*.J2K;*.pdf;*.PDF;*.mbtiles;*.MBTILES;*.shp;*.SHP;</li>
    <li style="--t:-.31px">GDAL/OGR VSIFileHandler (*.zip;*.gz;*.tar;*.tar.gz;*.tgz;*.ZIP;*.GZ;*.TAR;*.TAR.GZ;*.TGZ)</li>
    <li style="--t:-.18px">Arc/Info ASCII Coverage (*.e00;*.E00)</li>
    <li style="--t:-.25px">Arc/Info Generate (*.gen;*.GEN)</li>
    <li style="--t:-.17px">AutoCAD DXF (*.dxf;*.DXF)</li>
    <li style="--t:-.2px">AutoCAD Driver (*.dwg;*.DWG)</li>
    <li style="--t:-.23px">Bathymetry Attributed Grid (*.bag;*.BAG)</li>
    <li style="--t:-.25px">Comma Separated Value (*.csv;*.CSV)</li>
    <li style="--t:-.32px">Czech Cadastral Exchange Data Format (*.vfk;*.VFK)</li>
    <li style="--t:-.41px">EDIGEO (*.thf;*.THF)</li>
    <li style="--t:-.41px">EPIInfo .REC (*.rec;*.REC)</li>
    <li style="--t:-.34px">ESRI Personal GeoDatabase (*.mdb;*.MDB)</li>
    <li style="--t:-.38px">ESRI Shapefiles (*.shp;*.shz;*.shp.zip;*.SHP;*.SHZ;*.SHP.ZIP)</li>
    <li class="hot" style="--t:-.17px">ESRIJSON (*.json;*.JSON)</li>
    <li style="--t:-.32px">FlatGeobuf (*.fgb;*.FGB)</li>
    <li style="--t:-.08px">GMT ASCII Vectors (.gmt) (*.gmt;*.GMT)</li>
    <li style="--t:-.2px">GPS eXchange Format [GPX] (*.gpx;*.GPX)</li>
    <li style="--t:-.3px">GPSTrackMaker (*.gtm;*.gtz;*.GTM;*.GTZ)</li>
    <li style="--t:-.06px">GeoJSON (*.geojson;*.GEOJSON)</li>
    <li style="--t:-.165px">GeoJSON Newline Delimited JSON (*.geojsonl;*.geojsons;*.nlgeojson;*.json;*.GEOJSONL;*.GEOJSONS;*.NLGEOJSON;*.JSON)</li>
    <li style="--t:-.2px">GeoPackage (*.gpkg;*.GPKG)</li>
    <li style="--t:-.16px">GeoRSS (*.xml;*.XML)</li>
    <li style="--t:-.16px">Geoconcept (*.gxt;*.txt;*.GXT;*.TXT)</li>
    <li style="--t:-.22px">Geography Markup Language [GML] (*.gml;*.GML)</li>
    <li style="--t:-.29px">Geomedia .mdb (*.mdb;*.MDB)</li>
    <li style="--t:-.37px">Geospatial PDF (*.pdf;*.PDF)</li>
    <li style="--t:-.36px">INTERLIS 1 (*.itf;*.xml;*.ili;*.ITF;*.XML;*.ILI)</li>
    <li style="--t:-.35px">INTERLIS 2 (*.xtf;*.xml;*.ili;*.XTF;*.XML;*.ILI)</li>
    <li style="--t:-.08px">Idrisi Vector (.vct) (*.vct;*.VCT)</li>
  </ul>
  <div class="redbox"></div>
</div>
</body>
</html>
```
FILE: styles.css
```css
* { box-sizing: border-box; }
body { margin: 0; font-family: "Open Sans", "Noto Sans CJK SC", sans-serif; font-size: 15px; color: #000; }
ul { list-style: none; margin: 0; padding: 0; }
u { text-underline-offset: 2px; text-decoration-thickness: 1px; }
.defs { position: absolute; }
.screen { position: relative; width: 1880px; height: 972px; overflow: hidden; background: #fff; }

.app { display: flex; flex-direction: column; height: 972px; background: #f0f0f0; }
.titlebar { height: 10px; background: #fff; overflow: hidden; display: flex; justify-content: space-between; color: #777; }
.title { font-size: 16px; line-height: 22px; margin: -15px 0 0 -7px; }
.winbtn { margin-right: 9px; }
.menubar { display: flex; height: 25px; border-bottom: 1px solid #d2d2d2; background: #eee; color: #999; font-size: 15.500px; line-height: 24px; gap: 16px; margin-left: -20px; }
.toolbar { display: flex; align-items: center; background: linear-gradient(#fafafa, #ececec); border-bottom: 1px solid #b4b4b4; height: 39px; }
.toolbar > * { flex: none; }
.toolbar b { width: 33px; height: 32px; display: flex; align-items: center; justify-content: center; border-radius: 2px; border: 1px solid transparent; }
.toolbar b svg { width: 24px; height: 24px; overflow: visible; }
.toolbar b:first-child { margin-left: -16px; }
.toolbar b.on { background: #d9d9d9; border-color: #b3b3b3; }
.off { opacity: .3; }
.dim { opacity: .45; }
.gray { filter: grayscale(1); }
.flip { transform: scaleX(-1); }
.grip { width: 18px; height: 20px; }
.grip::after { content: ""; display: block; margin-left: 9px; width: 4px; height: 20px; background: radial-gradient(circle, #aaa .8px, transparent 1px) 0 0 / 4px 3px; }
.arr { width: 15px; display: flex; justify-content: center; }
.arr svg { width: 10px; height: 6px; }
.sep { width: 8px; height: 28px; border-left: 1px solid #ccc; }
.t9 { font: 700 9px "DejaVu Sans"; letter-spacing: -.6px; }
.t8 { font: 700 8px "DejaVu Sans"; fill: #44336b; letter-spacing: -.6px; }
.t7 { font: 7px "DejaVu Sans"; fill: #222; letter-spacing: -.4px; }
.red { fill: #d33; }

.work { flex: 1; display: flex; margin-top: 20px; min-height: 0; }
.dock { width: 355px; flex: none; display: flex; flex-direction: column; border-top: 1px solid #bdbdbd; margin-top: -3px; }
.map { flex: none; display: block; }
.dockhead { height: 23px; display: flex; justify-content: space-between; align-items: center; padding-right: 8px; }
.cut { margin-left: -27px; font-size: 16px; }
.docktools { height: 28px; display: flex; align-items: center; padding-bottom: 1px; }
.layers { width: 347px; flex: 1; background: #fff; border: 1px solid #bbb; border-left: 0; overflow: hidden; font-weight: 700; font-size: 15.500px; letter-spacing: -.2px; }
.layers li { height: 21px; display: flex; align-items: center; white-space: nowrap; padding-right: 20px; }
.layers li.sel, .layers li.ras { height: 22px; }
.layers li span { line-height: 19px; padding-bottom: 1px; }
.layers li.sel { background: #f0f0f0; }
.layers s { width: 16px; height: 16px; border: 1px solid #aaa; border-left: 0; background: #fff; flex: none; margin-right: 8px; }
.layers .ck { display: flex; }
.layers .ck::before { content: ""; width: 5px; height: 10px; margin: 0 0 0 5px; border: solid #111; border-width: 0 2px 2px 0; transform: rotate(38deg); }
.layers em { flex: none; width: 16px; height: 16px; border-radius: 50%; background: var(--c); border: 1px solid #333a; margin-right: 8px; }
.layers em.s { width: 10px; height: 10px; margin: 0 12px 0 3px; }
.layers em.line { width: 18px; height: 2px; border: 0; border-radius: 0; margin: 0 6px 0 -2px; }
.hid { color: #808080; font-style: italic; }
.cur { font-style: italic; text-decoration: underline; }
.tbl .tb { width: 18px; height: 20px; margin-right: 7px; }
.rs { width: 16px; height: 16px; margin-right: 8px; flex: none; }
.docktabs { height: 23px; display: flex; font: 13.330px "Liberation Mono", monospace; border-top: 1px solid #bbb; width: 347px; margin-top: 1px; overflow: hidden; }
.tab { width: 85px; height: 24px; border: 1px solid #c2c2c2; border-top: 0; background: #dcdcdc; text-align: center; line-height: 31px; }
.tab.act { width: 48px; background: #f3f3f3; padding-right: 16px; border: 0; direction: rtl; overflow: hidden; white-space: nowrap; text-align: right; }

.dsm { position: absolute; left: 632px; top: 116px; width: 1001px; height: 660px; background: #f0f0f0; border: 1px solid #999; display: flex; flex-direction: column; box-shadow: 0 3px 12px #0008; }
.dsm header { height: 37px; background: #fff; display: flex; align-items: center; gap: 6px; padding: 0 0 3px 9px; color: #999; font-size: 16.200px; white-space: nowrap; }
.dsmbody { flex: 1; display: flex; }
.dsmnav { width: 109px; }
.brow { background: #595959; height: 36px; color: #fff; display: flex; align-items: center; gap: 7px; padding-left: 4px; font-size: 15.500px; }
.dsmsc { width: 17px; height: 17px; border-bottom: 1px solid #ccc; padding: 3px 3px; line-height: 0; }
.dsmmain { font: 700 17px "Liberation Serif", serif; padding: 3px 0 0 9px; }
.dsm footer { height: 28px; display: flex; justify-content: flex-end; gap: 7px; padding: 0 2px 3px 0; margin-bottom: 0; }
.dsm button { width: 80px; height: 24px; border: 1px solid #b0b0b0; border-radius: 3px; background: linear-gradient(#fff, #f3f3f3); font: 13.330px "Liberation Mono", monospace; color: #000; padding: 2px 0 0; }
.dsm button:disabled { color: #999; }

.dialog { position: absolute; left: 95px; top: 196px; width: 944px; height: 591px; background: #fff; border: 1px solid #5e5e5e; display: flex; flex-direction: column; box-shadow: 0 5px 16px #0007; }
.dialog header { height: 36px; display: flex; align-items: center; gap: 5px; padding: 0 0 2px 9px; font-size: 16px; letter-spacing: -.1px; }
.navrow { display: flex; height: 38px; margin: 5px 0 8px; }
.navs { align-self: center; flex: none; }
.addr { width: 489px; border: 1px solid #d9d9d9; display: flex; align-items: center; padding-left: 5px; font-size: 15px; }
.addr q { quotes: none; width: 6px; height: 6px; border: solid #777; border-width: 1.500px 1.500px 0 0; transform: rotate(45deg); margin: 0 12px 0 10px; }
.addr > svg + q { margin-right: 14px; }
.addr .dd { margin-left: auto; margin-right: 14px; color: #666; }
.rel { width: 44px; border: 1px solid #d9d9d9; border-left: 0; display: flex; align-items: center; padding-left: 13px; }
.search { flex: 1; margin: 0 12px 0 11px; border: 1px solid #d9d9d9; }
.cmds { height: 38px; background: #f4f6f9; color: #1e3a5f; display: flex; align-items: center; padding-left: 22px; gap: 35px; border-bottom: 1px solid #e4e6ea; }
.cmds svg { margin: 0 0 3px 6px; }
.panes { display: flex; height: 364px; }
.tree { width: 175px; overflow: hidden; flex: none; }
.n { height: 30px; display: flex; align-items: center; padding-left: 40px; gap: 5px; white-space: nowrap; }
.n svg { width: 20px; height: 20px; flex: none; }
.n svg.fo { width: 14px; height: 18px; margin: 0 4px 0 2px; }
.n.a { margin: 0 0 10px; }
.n.root { padding-left: 30px; }
.n.net { margin-top: 10px; }
.pick { background: #d9d9d9; }
.vbar { width: 19px; background: #f0f0f0; display: flex; flex-direction: column; align-items: center; color: #555; margin-right: 6px; flex: none; }
.vbar .up { margin-top: 7px; transform: scaleY(-1); }
.vbar .thumb { width: 19px; height: 131px; background: #cdcdcd; margin: 186px 0 17px; }
.files { flex: 1; display: flex; flex-direction: column; min-width: 0; }
.fh { height: 42px; display: flex; color: #4a5f80; line-height: 34px; }
.c1 { width: 340px; padding-left: 20px; border-right: 1px solid #e2e2e2; height: 36px; position: relative; }
.sort { position: absolute; left: 171px; top: 1px; transform: scaleY(-1); color: #888; }
.c2 { padding-left: 7px; }
.fl { height: 302px; overflow: hidden; }
.f { height: 27px; display: flex; align-items: center; padding: 0 0 2px 25px; white-space: nowrap; }
.f svg { width: 16px; height: 20px; margin: 0 7px 0 0; flex: none; }
.f svg.fo { width: 14px; height: 18px; margin: 0 9px 0 0; }
.f span { width: 299px; font-size: 16px; letter-spacing: -.12px; }
.f time { color: #757575; font-size: 16px; letter-spacing: -.12px; }
.hbar { height: 20px; background: #f0f0f0; display: flex; align-items: center; color: #555; }
.hbar svg { transform: rotate(90deg); margin: 0 5px 0 4px; }
.ht { flex: 1; height: 20px; background: #cdcdcd; }
.foot { flex: 1; background: #f0f0f0; position: relative; padding-top: 16px; }
.frow { display: flex; height: 29px; align-items: center; }
.frow label { width: 247px; text-align: right; padding-right: 8px; font-size: 15.500px; }
.inp { width: 422px; height: 29px; background: #fff; border: 1px solid #7a7a7a; display: flex; justify-content: flex-end; align-items: center; padding-right: 4px; margin-right: 15px; color: #555; }
.combo { width: 235px; height: 28px; background: #cce4f7; border: 1px solid #1b5f9c; display: flex; justify-content: space-between; align-items: center; padding: 0 4px 0 3px; color: #333; }
.combo span { color: #000; font-size: 16px; letter-spacing: -.15px; }
.brw { display: flex; gap: 17px; margin: 8px 0 0 685px; }
.btn { width: 108px; height: 31px; background: #e1e1e1; border: 1px solid #adadad; text-align: center; line-height: 29px; }
.btn.main { border: 2px solid #0f78d4; line-height: 27px; }
.size { position: absolute; right: 2px; bottom: 1px; }

.popup { position: absolute; left: 780px; top: 101px; width: 1110px; height: 602px; background: #fff; border: 1px solid #1479cc; font-size: 16px; }
.popup li { height: 20px; line-height: 18px; padding-left: 2px; white-space: nowrap; letter-spacing: var(--t); }
.popup .hot { background: #0078d7; color: #fff; outline: 1px dotted #8a5a20; outline-offset: -1px; }
.redbox { position: absolute; left: 761px; top: 98px; width: 1118px; height: 610px; border: 4px solid #ee2a20; border-radius: 5px; }
```
